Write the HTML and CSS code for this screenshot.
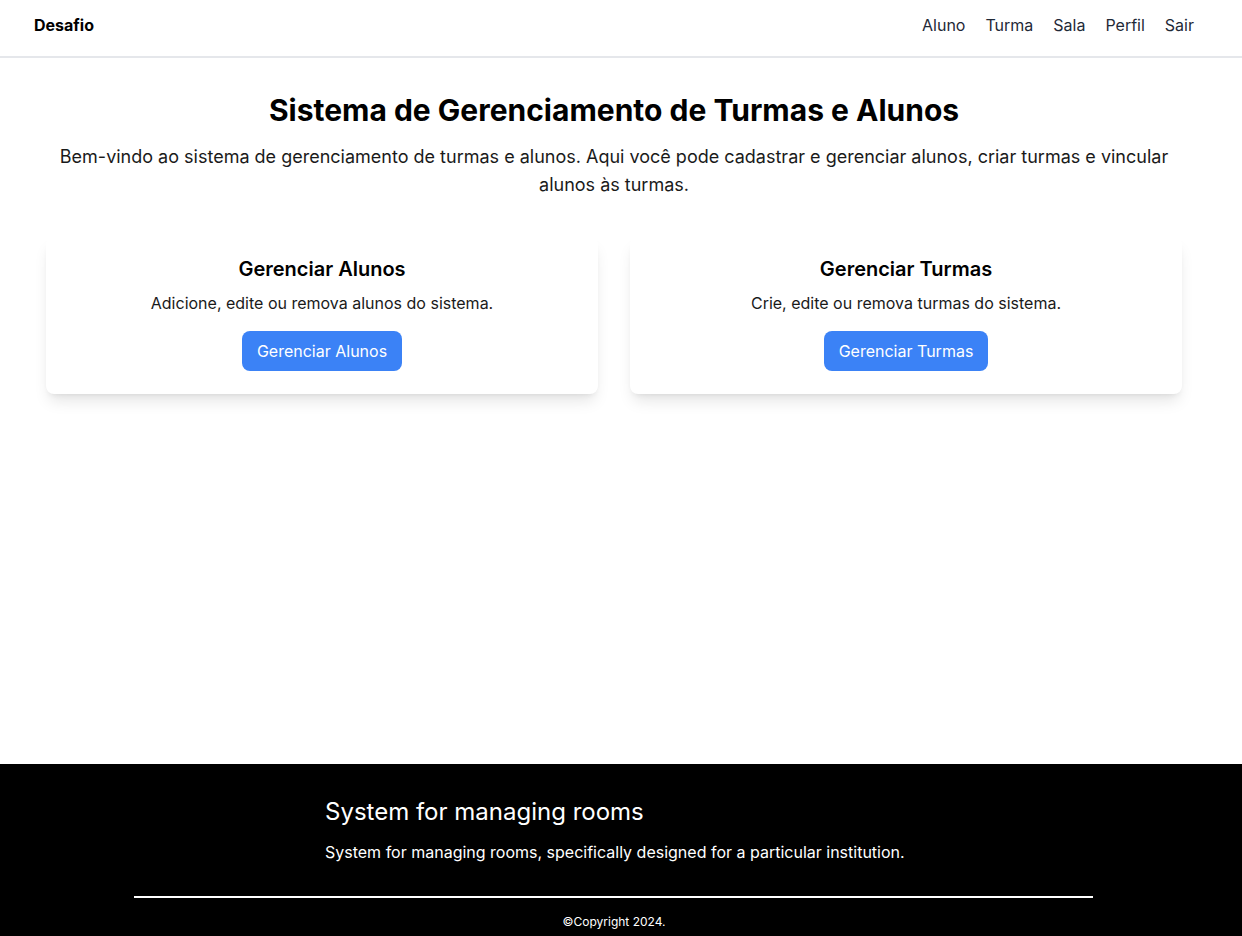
FILE: index.html
```html
<!DOCTYPE html>
<html lang="pt-BR">
<head>
<meta charset="utf-8">
<title>Desafio</title>
<link rel="stylesheet" href="styles.css">
</head>
<body>
<div class="page">
  <header class="navbar">
    <a class="brand" href="#">Desafio</a>
    <nav class="nav-links">
      <a href="#">Aluno</a>
      <a href="#">Turma</a>
      <a href="#">Sala</a>
      <a href="#">Perfil</a>
      <a href="#">Sair</a>
    </nav>
  </header>
  <main class="main">
    <h1 class="title">Sistema de Gerenciamento de Turmas e Alunos</h1>
    <p class="lead">Bem-vindo ao sistema de gerenciamento de turmas e alunos. Aqui você pode cadastrar e gerenciar alunos, criar turmas e vincular alunos às turmas.</p>
    <div class="cards">
      <section class="card">
        <h2 class="card-title">Gerenciar Alunos</h2>
        <p class="card-text">Adicione, edite ou remova alunos do sistema.</p>
        <a class="btn" href="#">Gerenciar Alunos</a>
      </section>
      <section class="card">
        <h2 class="card-title">Gerenciar Turmas</h2>
        <p class="card-text">Crie, edite ou remova turmas do sistema.</p>
        <a class="btn" href="#">Gerenciar Turmas</a>
      </section>
    </div>
  </main>
  <footer class="footer">
    <div class="footer-top">
      <h3 class="footer-title">System for managing rooms</h3>
      <p class="footer-text">System for managing rooms, specifically designed for a particular institution.</p>
    </div>
    <hr class="footer-rule">
    <p class="copyright">©Copyright 2024.</p>
  </footer>
</div>
</body>
</html>
```

FILE: styles.css
```css
* { box-sizing: border-box; }
html, body { margin: 0; padding: 0; }
body {
  font-family: Inter, "Noto Sans", sans-serif;
  color: #000;
  background: #fff;
}
a { text-decoration: none; color: inherit; }

.page {
  min-height: 100vh;
  display: flex;
  flex-direction: column;
}

.navbar {
  height: 58px;
  display: flex;
  align-items: center;
  justify-content: space-between;
  padding: 0 48px 6px 34px;
  border-bottom: 2px solid #e5e7eb;
}
.brand {
  font-weight: 700;
  font-size: 16px;
  color: #000;
}
.nav-links {
  display: flex;
  gap: 20px;
}
.nav-links a {
  font-size: 16px;
  color: #1f2937;
}

.main {
  flex: 1;
  padding: 30px 60px 0 46px;
  display: flex;
  flex-direction: column;
  align-items: center;
}
.title {
  margin: 0;
  font-size: 30px;
  line-height: 44px;
  font-weight: 700;
  text-align: center;
}
.lead {
  margin: 11px 0 0;
  font-size: 18px;
  line-height: 28px;
  text-align: center;
  color: #1a1a1a;
  max-width: 1110px;
}

.cards {
  align-self: stretch;
  margin-top: 38px;
  display: grid;
  grid-template-columns: 1fr 1fr;
  gap: 32px;
}
.card {
  background: #fff;
  border-radius: 8px;
  box-shadow: 0 10px 15px -3px rgba(0,0,0,0.1), 0 4px 6px -4px rgba(0,0,0,0.1);
  padding: 18px 24px 23px;
  display: flex;
  flex-direction: column;
  align-items: center;
}
.card-title {
  margin: 0;
  font-size: 20px;
  line-height: 28px;
  font-weight: 600;
}
.card-text {
  margin: 8px 0 0;
  font-size: 16px;
  line-height: 24px;
  color: #1a1a1a;
}
.btn {
  margin-top: 16px;
  height: 40px;
  display: inline-flex;
  align-items: center;
  padding: 0 15px;
  background: #3b82f6;
  color: #fff;
  border-radius: 8px;
  font-size: 16px;
}

.footer {
  background: #000;
  color: #fff;
  height: 172px;
  padding-top: 32px;
}
.footer-top {
  padding-left: 325px;
}
.footer-title {
  margin: 0;
  font-size: 24px;
  line-height: 32px;
  font-weight: 400;
}
.footer-text {
  margin: 12px 0 0;
  font-size: 16px;
  line-height: 24px;
}
.footer-rule {
  margin: 32px 149px 0 134px;
  border: 0;
  border-top: 2px solid #fff;
  height: 0;
}
.copyright {
  margin: 16px 0 0;
  font-size: 12px;
  line-height: 16px;
  text-align: center;
  padding-right: 14px;
}
```
